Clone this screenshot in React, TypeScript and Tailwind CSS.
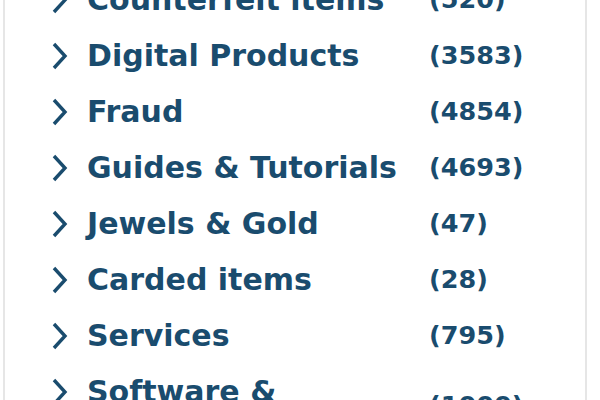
import React from "react";

const items: [string, string][] = [
  ["Counterfeit items", "(520)"],
  ["Digital Products", "(3583)"],
  ["Fraud", "(4854)"],
  ["Guides & Tutorials", "(4693)"],
  ["Jewels & Gold", "(47)"],
  ["Carded items", "(28)"],
  ["Services", "(795)"],
  ["Software & Malware", "(1000)"],
];

function Chevron() {
  return (
    <svg width="20" height="30" viewBox="0 0 20 30" className="shrink-0 self-start mt-[13px]">
      <polyline points="5,3 16,15 5,27" fill="none" stroke="#1a4c6e" strokeWidth="3.4" strokeLinecap="butt" strokeLinejoin="miter" />
    </svg>
  );
}

export default function App() {
  return (
    <div className="w-[600px] h-[400px] overflow-hidden bg-white" style={{ fontFamily: '"DejaVu Sans", sans-serif' }}>
      <div className="ml-[3px] w-[584px] h-[400px] border-l-2 border-r-2 border-[#e6e6e6] overflow-hidden">
        <ul className="-mt-[28px]">
          {items.map(([name, count]) => (
            <li key={name} className="flex items-center min-h-[56px] pl-[44px] text-[#1a4c6e] font-bold">
              <Chevron />
              <span className="ml-[18px] w-[342px] shrink-0 text-[30px] leading-[28px] py-[14px]">{name}</span>
              <span className="text-[25.5px] leading-none">{count}</span>
            </li>
          ))}
        </ul>
      </div>
    </div>
  );
}
